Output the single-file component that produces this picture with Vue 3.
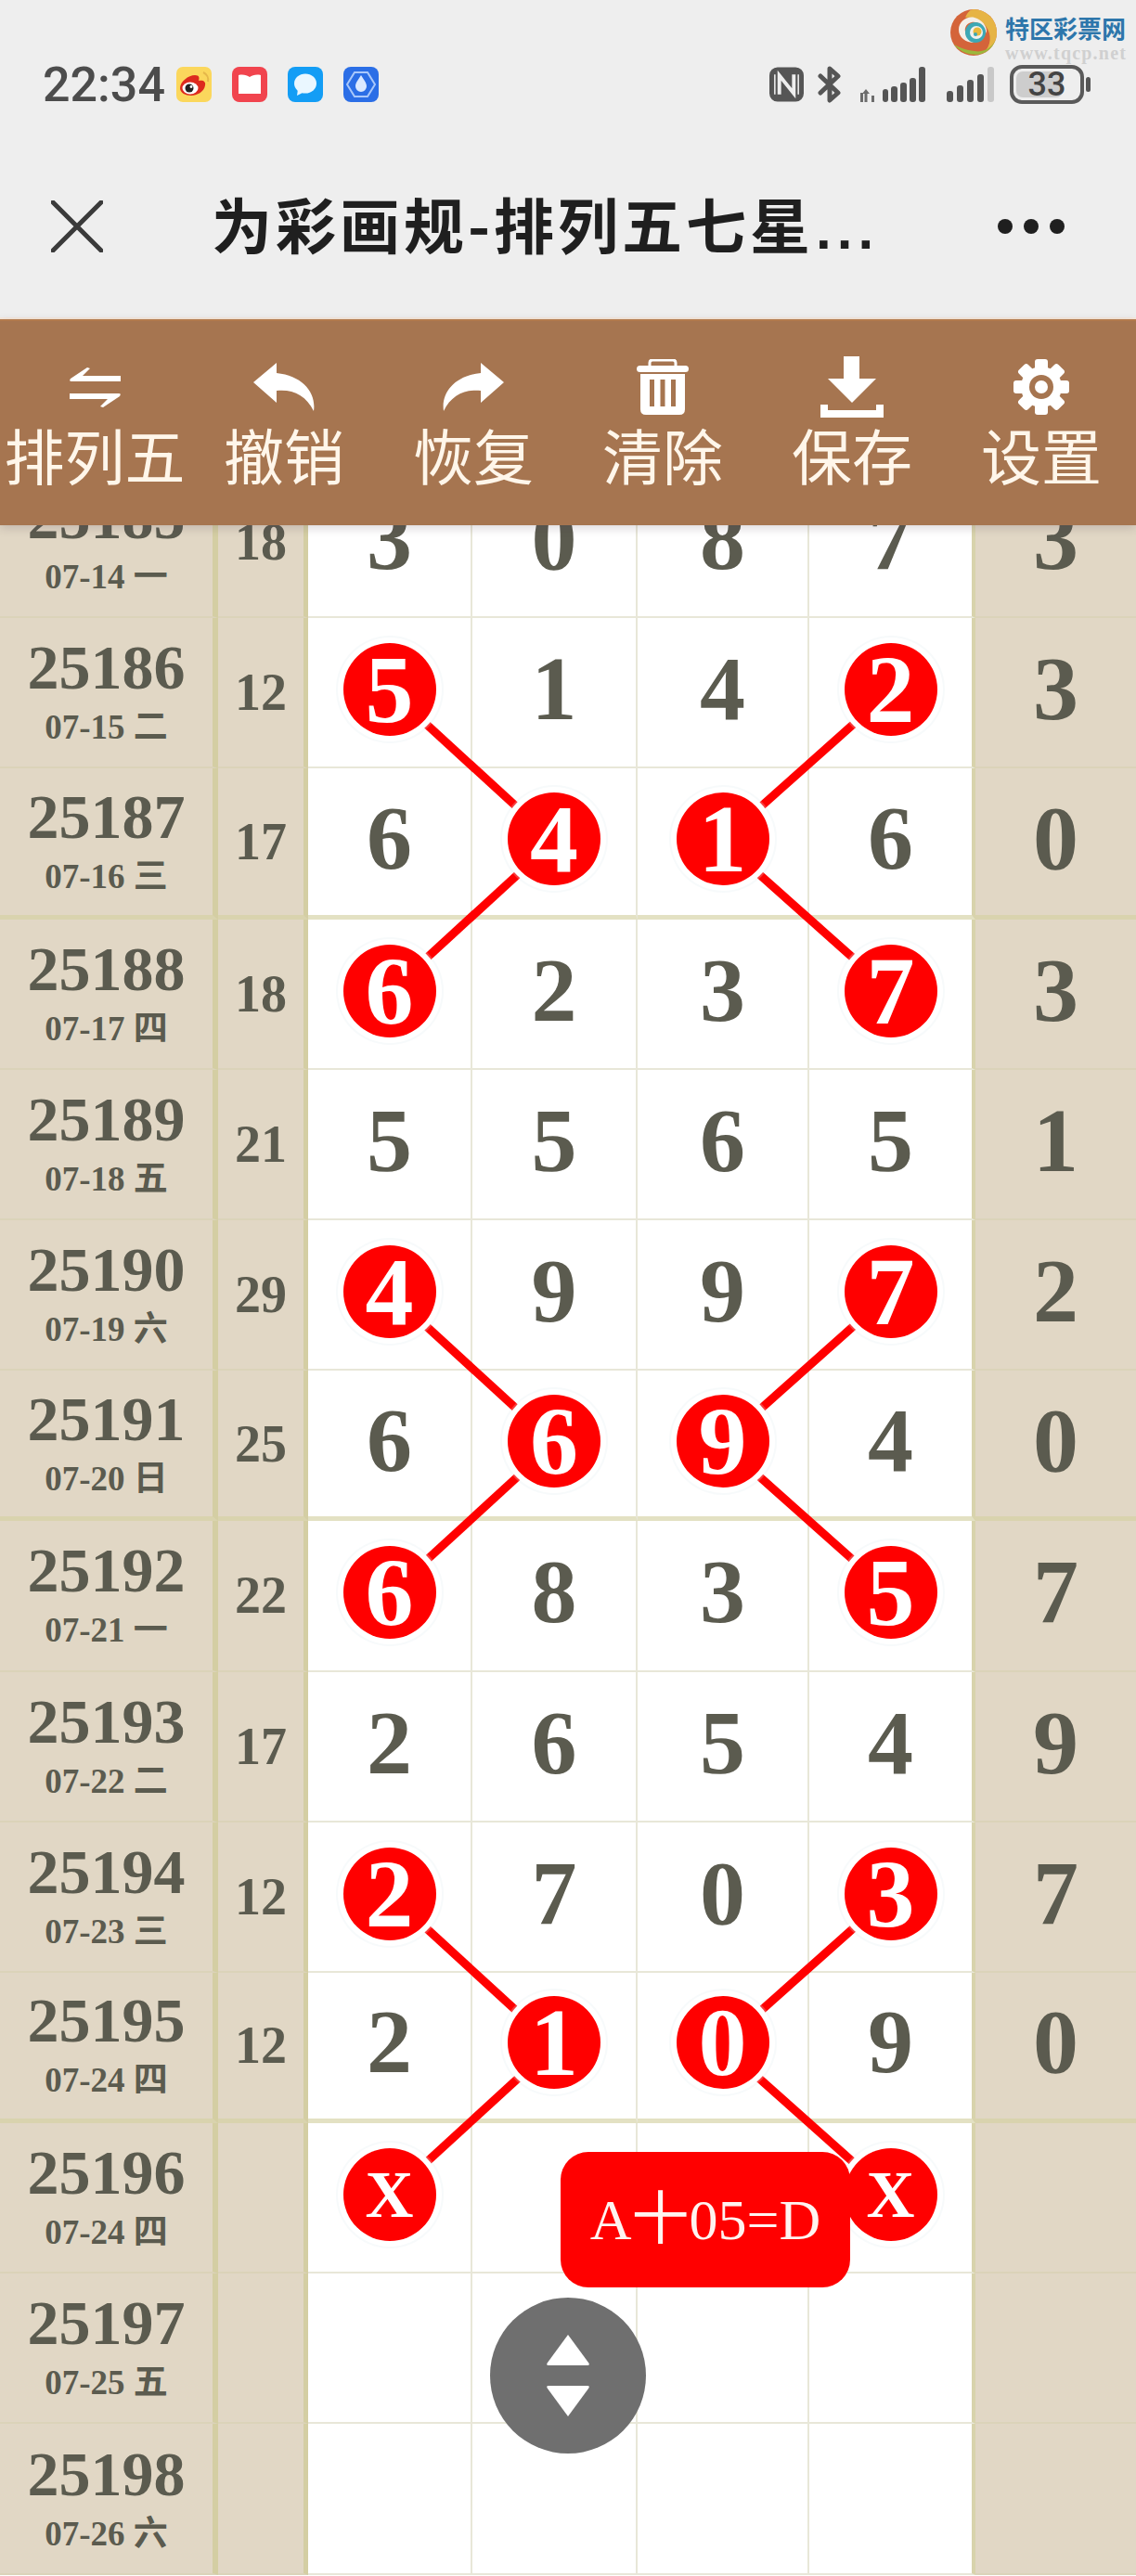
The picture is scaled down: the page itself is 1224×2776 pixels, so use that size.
<script setup>
const weeks = ['07-14 一','07-15 二','07-16 三','07-17 四','07-18 五','07-19 六','07-20 日','07-21 一','07-22 二','07-23 三','07-24 四','07-24 四','07-25 五','07-26 六']
const raw = [
  [25185,18,['3','0','8','7'],[],'3'],
  [25186,12,['5','1','4','2'],[0,3],'3'],
  [25187,17,['6','4','1','6'],[1,2],'0'],
  [25188,18,['6','2','3','7'],[0,3],'3'],
  [25189,21,['5','5','6','5'],[],'1'],
  [25190,29,['4','9','9','7'],[0,3],'2'],
  [25191,25,['6','6','9','4'],[1,2],'0'],
  [25192,22,['6','8','3','5'],[0,3],'7'],
  [25193,17,['2','6','5','4'],[],'9'],
  [25194,12,['2','7','0','3'],[0,3],'7'],
  [25195,12,['2','1','0','9'],[1,2],'0'],
  [25196,'',['X','','','X'],[0,3],''],
  [25197,'',['','','',''],[],''],
  [25198,'',['','','',''],[],''],
]
const rows = raw.map((r, i) => ({
  id: r[0], sum: r[1], cells: r[2], hits: r[3], last: r[4], date: weeks[i],
  thick: i === 2 || i === 6 || i === 10,
}))
const rowH = 162.2
const cx = [420, 597, 778, 960]
const cy = (i) => (i + 0.5) * rowH - 3
const lines = []
for (const g of [1, 5, 9]) {
  lines.push(
    [cx[0], cy(g), cx[1], cy(g + 1)],
    [cx[1], cy(g + 1), cx[0], cy(g + 2)],
    [cx[3], cy(g), cx[2], cy(g + 1)],
    [cx[2], cy(g + 1), cx[3], cy(g + 2)],
  )
}
const teeth = [0, 45, 90, 135, 180, 225, 270, 315]
const bars1 = [[27,12,6,14],[36,9,7,17],[46,5,7,21],[56,0,7,26]]
</script>

<template>
  <div class="page">
    <header class="status">
      <div class="status-left">
        <span class="time">22:34</span>
        <svg class="app first" viewBox="0 0 38 38">
          <rect width="38" height="38" rx="7" fill="#fbd75c"/>
          <path d="M29 6c4 2 6 6 5 10" fill="none" stroke="#e6b84a" stroke-width="2"/>
          <path d="M4 23c0-7 9-14 16-14 5 0 5 3 4 6 5-1 8 1 7 5-1 7-9 11-15 11C10 31 4 28 4 23z" fill="#dd2a1e"/>
          <ellipse cx="15" cy="23" rx="8.5" ry="6.5" fill="#fff"/>
          <circle cx="14" cy="23" r="4.5" fill="#222"/>
          <circle cx="16" cy="21.5" r="1.4" fill="#fff"/>
        </svg>
        <svg class="app" viewBox="0 0 38 38">
          <rect width="38" height="38" rx="8" fill="#f1444e"/>
          <path d="M7 9c5-1 9 0 12 2 3-2 7-3 12-2v20H7z" fill="#fff"/>
        </svg>
        <svg class="app" viewBox="0 0 38 38">
          <rect width="38" height="38" rx="8" fill="#139df5"/>
          <ellipse cx="19" cy="18" rx="12" ry="10.5" fill="#eaf7ff"/>
          <path d="M11 24l-1 7 8-4z" fill="#eaf7ff"/>
        </svg>
        <svg class="app" viewBox="0 0 38 38">
          <rect width="38" height="38" rx="8" fill="#2b6ee6"/>
          <path d="M12 6h14l8 13-8 13H12L4 19z" fill="none" stroke="#a9c8fb" stroke-width="2"/>
          <path d="M19 9c3 5 6 8 6 12a6 6 0 0 1-12 0c0-4 3-7 6-12z" fill="#dbe9ff"/>
        </svg>
      </div>
      <div class="status-right">
        <svg class="nfc" viewBox="0 0 38 38">
          <rect width="38" height="38" rx="9" fill="#555"/>
          <path d="M11 30V9l16 20V8" fill="none" stroke="#eee" stroke-width="4"/>
          <path d="M6 8v22M32 8v22" stroke="#eee" stroke-width="1.6"/>
        </svg>
        <svg class="bt" viewBox="0 0 26 40">
          <path d="M3 11l19 18-9 8V3l9 8L3 29" fill="none" stroke="#555" stroke-width="5" stroke-linejoin="round" stroke-linecap="round"/>
        </svg>
        <svg class="sig1" viewBox="0 0 73 38" fill="#555">
          <path d="M3 28h3v10H3zM9 24l4 5h-2.500v9h-3V29H5zM15 31h3v7h-3z" opacity=".85"/>
          <rect v-for="b in bars1" :key="b[0]" :x="b[0]" :y="b[1] + 12" :width="b[2]" :height="b[3]" rx="3"/>
          <rect x="66" y="0" width="7" height="38" rx="3"/>
        </svg>
        <svg class="sig2" viewBox="0 0 51 38">
          <rect x="0" y="26" width="7" height="12" rx="3" fill="#555"/>
          <rect x="11" y="20" width="7" height="18" rx="3" fill="#555"/>
          <rect x="22" y="14" width="7" height="24" rx="3" fill="#555"/>
          <rect x="33" y="8" width="7" height="30" rx="3" fill="#555"/>
          <rect x="44" y="0" width="7" height="38" rx="3" fill="#c8c8c8"/>
        </svg>
        <div class="battery"><span class="batt-fill"></span><span class="batt-num">33</span></div>
        <span class="nub"></span>
      </div>
      <div class="mark">
        <svg class="mark-logo" viewBox="0 0 50 50">
          <circle cx="25" cy="25" r="25" fill="#d4643a"/>
          <path d="M25 0a25 25 0 0 1 25 25c0 10-6 18-14 22 8-8 9-20 2-29C33 11 24 8 16 9c2-5 5-9 9-9z" fill="#e6b445"/>
          <path d="M4 38c6 8 20 14 32 9 7-3 12-10 14-18-3 12-14 18-24 16C17 44 9 41 4 38z" fill="#9bb83c"/>
          <path d="M9 22c0-9 9-15 17-13 8 2 14 9 13 17-3-8-9-13-16-12-5 1-8 5-7 10 1 6 5 10 10 12-10 0-17-6-17-14z" fill="#f4efe8"/>
          <circle cx="27" cy="25" r="11" fill="#3da8b5"/>
          <circle cx="28" cy="25" r="7" fill="#f0f0ee"/>
          <circle cx="29" cy="24" r="4.500" fill="#e8b93c"/>
          <circle cx="27" cy="27" r="2" fill="#3da8b5"/>
        </svg>
        <div class="mark-text">
          <span class="mark-cn">特区彩票网</span>
          <span class="mark-en">www.tqcp.net</span>
        </div>
      </div>
    </header>

    <nav class="nav">
      <svg class="close" viewBox="0 0 56 56"><path d="M2 2l52 52M54 2L2 54" stroke="#3a3a3a" stroke-width="5" stroke-linecap="round"/></svg>
      <div class="title">为彩画规-排列五七星<span class="dots">...</span></div>
      <div class="more"><i></i><i></i><i></i></div>
    </nav>

    <section class="toolbar">
      <div class="tool">
        <div class="tool-icon">
          <svg width="55" height="43" viewBox="0 0 55 43" fill="#fff">
            <path d="M19 0L1 12q-2 3 1 3H55V9H14l8-8z"/>
            <path d="M36 43l18-12q2-3-1-3H0v6h41l-8 8z"/>
          </svg>
        </div>
        <span>排列五</span>
      </div>
      <div class="tool">
        <div class="tool-icon">
          <svg width="66" height="52" viewBox="0 0 66 52" fill="#fff"><path d="M25 0L0 21l25 22V30c17-2 32 5 40 22 3-20-12-38-40-41z"/></svg>
        </div>
        <span>撤销</span>
      </div>
      <div class="tool">
        <div class="tool-icon">
          <svg width="66" height="52" viewBox="0 0 66 52" fill="#fff"><path d="M41 0l25 21-25 22V30C24 28 9 35 1 52-2 32 13 14 41 11z"/></svg>
        </div>
        <span>恢复</span>
      </div>
      <div class="tool">
        <div class="tool-icon">
          <svg width="56" height="60" viewBox="0 0 56 60" fill="#fff">
            <path d="M14 8V4q0-3 3-3h22q3 0 3 3v4" fill="none" stroke="#fff" stroke-width="3"/>
            <rect x="0" y="7" width="56" height="7" rx="3.500"/>
            <path d="M4 16h48v38q0 6-6 6H10q-6 0-6-6z"/>
            <rect x="14" y="22" width="5" height="29" fill="#a67550"/>
            <rect x="25.500" y="22" width="5" height="29" fill="#a67550"/>
            <rect x="37" y="22" width="5" height="29" fill="#a67550"/>
          </svg>
        </div>
        <span>清除</span>
      </div>
      <div class="tool">
        <div class="tool-icon">
          <svg width="68" height="66" viewBox="0 0 68 66" fill="#fff">
            <path d="M25 0h17v24h18L34 50 8 24h17z"/>
            <path d="M0 52h8v6h52v-6h8v14H0z"/>
          </svg>
        </div>
        <span>保存</span>
      </div>
      <div class="tool">
        <div class="tool-icon">
          <svg width="62" height="60" viewBox="-31 -30 62 60" fill="#fff">
            <rect v-for="t in teeth" :key="t" x="-7" y="-30" width="14" height="14" rx="3" :transform="`rotate(${t})`"/>
            <circle r="22"/>
            <circle r="13" fill="#a67550"/>
            <circle r="7"/>
          </svg>
        </div>
        <span>设置</span>
      </div>
    </section>

    <main class="board">
      <div class="table">
        <svg class="links" viewBox="0 0 1224 2274">
          <line v-for="(l, i) in lines" :key="i" :x1="l[0]" :y1="l[1]" :x2="l[2]" :y2="l[3]" stroke="#f00" stroke-width="9"/>
        </svg>
        <div v-for="r in rows" :key="r.id" class="row" :class="{ thick: r.thick }">
          <div class="c-id">
            <b class="id">{{ r.id }}</b>
            <span class="date">{{ r.date }}</span>
          </div>
          <div class="c-sum">{{ r.sum }}</div>
          <div v-for="(v, i) in r.cells" :key="i" class="c-num">
            <span v-if="r.hits.includes(i)" class="ball" :class="{ x: v === 'X' }">{{ v }}</span>
            <template v-else>{{ v }}</template>
          </div>
          <div class="c-last">{{ r.last }}</div>
        </div>
      </div>
    </main>

    <div class="formula">A十05=D</div>
    <div class="updown">
      <svg width="50" height="92" viewBox="0 0 50 92" fill="#fff">
        <path d="M25 2L47 32q2 3-1 3H4q-3 0-1-3z"/>
        <path d="M25 90L47 60q2-3-1-3H4q-3 0-1 3z"/>
      </svg>
    </div>
  </div>
</template>

<style>
html, body { margin: 0; padding: 0; background: #fff; }
</style>

<style scoped>
.page {
  position: relative;
  width: 1224px;
  height: 2776px;
  overflow: hidden;
  background: #fff;
  font-family: "Liberation Serif", "Noto Sans CJK SC", serif;
}
.status {
  position: relative;
  height: 170px;
  box-sizing: border-box;
  padding: 70px 49px 0 46px;
  background: #eeeeee;
  display: flex;
  justify-content: space-between;
  align-items: flex-start;
}
.status-left, .status-right { display: flex; align-items: center; height: 42px; }
.time {
  font: 500 52px/44px Roboto, sans-serif;
  color: #4c4c4c;
  width: 144px;
  padding-top: 2px;
}
.app { width: 38px; height: 38px; margin-left: 22px; }
.app.first { margin-left: 0; }
.nfc { width: 37px; height: 38px; }
.bt { width: 26px; height: 40px; margin-left: 15px; }
.sig1 { width: 73px; height: 38px; margin-left: 17px; }
.sig2 { width: 51px; height: 38px; margin-left: 23px; }
.battery {
  position: relative;
  width: 80px;
  height: 42px;
  box-sizing: border-box;
  margin-left: 17px;
  border: 4px solid #5a5a5a;
  border-radius: 13px;
  display: flex;
  align-items: center;
  justify-content: center;
}
.batt-fill { position: absolute; left: 3px; top: 3px; bottom: 3px; width: 33%; min-width: 50px; background: #cdcdcd; border-radius: 7px; }
.batt-num { position: relative; font: 500 36px/34px Roboto, sans-serif; color: #444; }
.nub { width: 5px; height: 16px; margin-left: 2px; background: #555; border-radius: 3px; }
.mark {
  position: absolute;
  left: 1024px;
  top: 10px;
  width: 200px;
  display: flex;
  gap: 9px;
}
.mark-logo { width: 50px; height: 50px; flex: none; }
.mark-text { display: flex; flex-direction: column; padding-top: 4px; }
.mark-cn { font: 700 26px/32px "Noto Sans CJK SC", sans-serif; color: #2d76ab; white-space: nowrap; }
.mark-en { font: 700 20px/22px "Liberation Serif", serif; color: #d0d0d0; letter-spacing: 1.2px; white-space: nowrap; }
.nav {
  height: 174px;
  box-sizing: border-box;
  padding: 0 77px 24px 55px;
  background: #eeeeee;
  border-bottom: 2px solid #f6e9dd;
  display: flex;
  align-items: center;
}
.close { width: 56px; height: 56px; flex: none; }
.title {
  margin-left: 117px;
  flex: 1;
  font: 700 65px/80px "Noto Sans CJK SC", sans-serif;
  color: #1f1f1f;
  letter-spacing: 4px;
  white-space: nowrap;
}
.dots { font-family: "Liberation Sans", sans-serif; font-size: 60px; letter-spacing: 6px; margin-left: 2px; }
.more { display: flex; gap: 12px; }
.more i { width: 16px; height: 16px; border-radius: 50%; background: #1f1f1f; }
.toolbar {
  position: relative;
  z-index: 5;
  height: 222px;
  box-sizing: border-box;
  padding-top: 38px;
  background: #a67550;
  border-top: 2px solid #b27a4d;
  box-shadow: 0 3px 10px rgba(70, 50, 70, .2);
  display: grid;
  grid-template-columns: repeat(6, 204px);
}
.tool {
  display: flex;
  flex-direction: column;
  align-items: center;
  color: #fff6ea;
  font: 400 65px/70px "Noto Sans CJK SC", sans-serif;
  white-space: nowrap;
}
.tool-icon { height: 66px; margin-bottom: 4px; display: flex; align-items: center; justify-content: center; }
.board { height: 2210px; overflow: hidden; }
.table { position: relative; margin-top: -62px; color: #5b5b4f; }
.links { position: absolute; left: 0; top: 0; width: 1224px; height: 2274px; z-index: 1; }
.row {
  display: grid;
  grid-template-columns: 235px 97px 177px 178px 185px 179px 173px;
  height: 162.2px;
}
.row > div { display: flex; align-items: center; justify-content: center; box-sizing: border-box; font-weight: 700; border-bottom: 2px solid #dbd3b9; }
.row.thick > div { border-bottom: 5px solid #d9d3ae; }
.row > .c-num { border-bottom-color: #e8e7d8; }
.row.thick > .c-num { border-bottom-color: #e3e1c3; }
.c-id { flex-direction: column; background: #e1d7c5; border-right: 6px solid #d4cea3; padding-bottom: 2px; }
.id { font-size: 68px; line-height: 72px; }
.date { font-size: 37px; line-height: 46px; margin-top: 6px; }
.c-sum { background: #e1d7c5; border-right: 5px solid #d4cea3; font-size: 56px; }
.c-num { background: #fff; border-right: 2px solid #e8e7d8; font-size: 98px; line-height: 1; padding-bottom: 8px; }
.c-num:nth-child(6) { border-right: 4px solid #d8d3ac; }
.c-last { background: #e1d7c5; font-size: 98px; line-height: 1; padding-bottom: 8px; }
.ball {
  position: relative;
  z-index: 2;
  top: 1px;
  width: 100px;
  height: 100px;
  border-radius: 50%;
  background: #f00;
  color: #fff;
  font-size: 104px;
  line-height: 100px;
  text-align: center;
  box-shadow: 0 0 0 6px #fff, 0 0 0 8px rgba(225, 235, 240, .25);
}
.ball.x { font-size: 72px; }
.formula {
  position: absolute;
  z-index: 6;
  left: 604px;
  top: 2319px;
  width: 312px;
  height: 146px;
  box-sizing: border-box;
  padding-bottom: 12px;
  border-radius: 30px;
  background: #f00;
  color: #fff3f0;
  font-size: 62px;
  display: flex;
  align-items: center;
  justify-content: center;
  white-space: nowrap;
}
.updown {
  position: absolute;
  z-index: 6;
  left: 528px;
  top: 2476px;
  width: 168px;
  height: 168px;
  border-radius: 50%;
  background: #6f6f6f;
  display: flex;
  align-items: center;
  justify-content: center;
}
</style>
